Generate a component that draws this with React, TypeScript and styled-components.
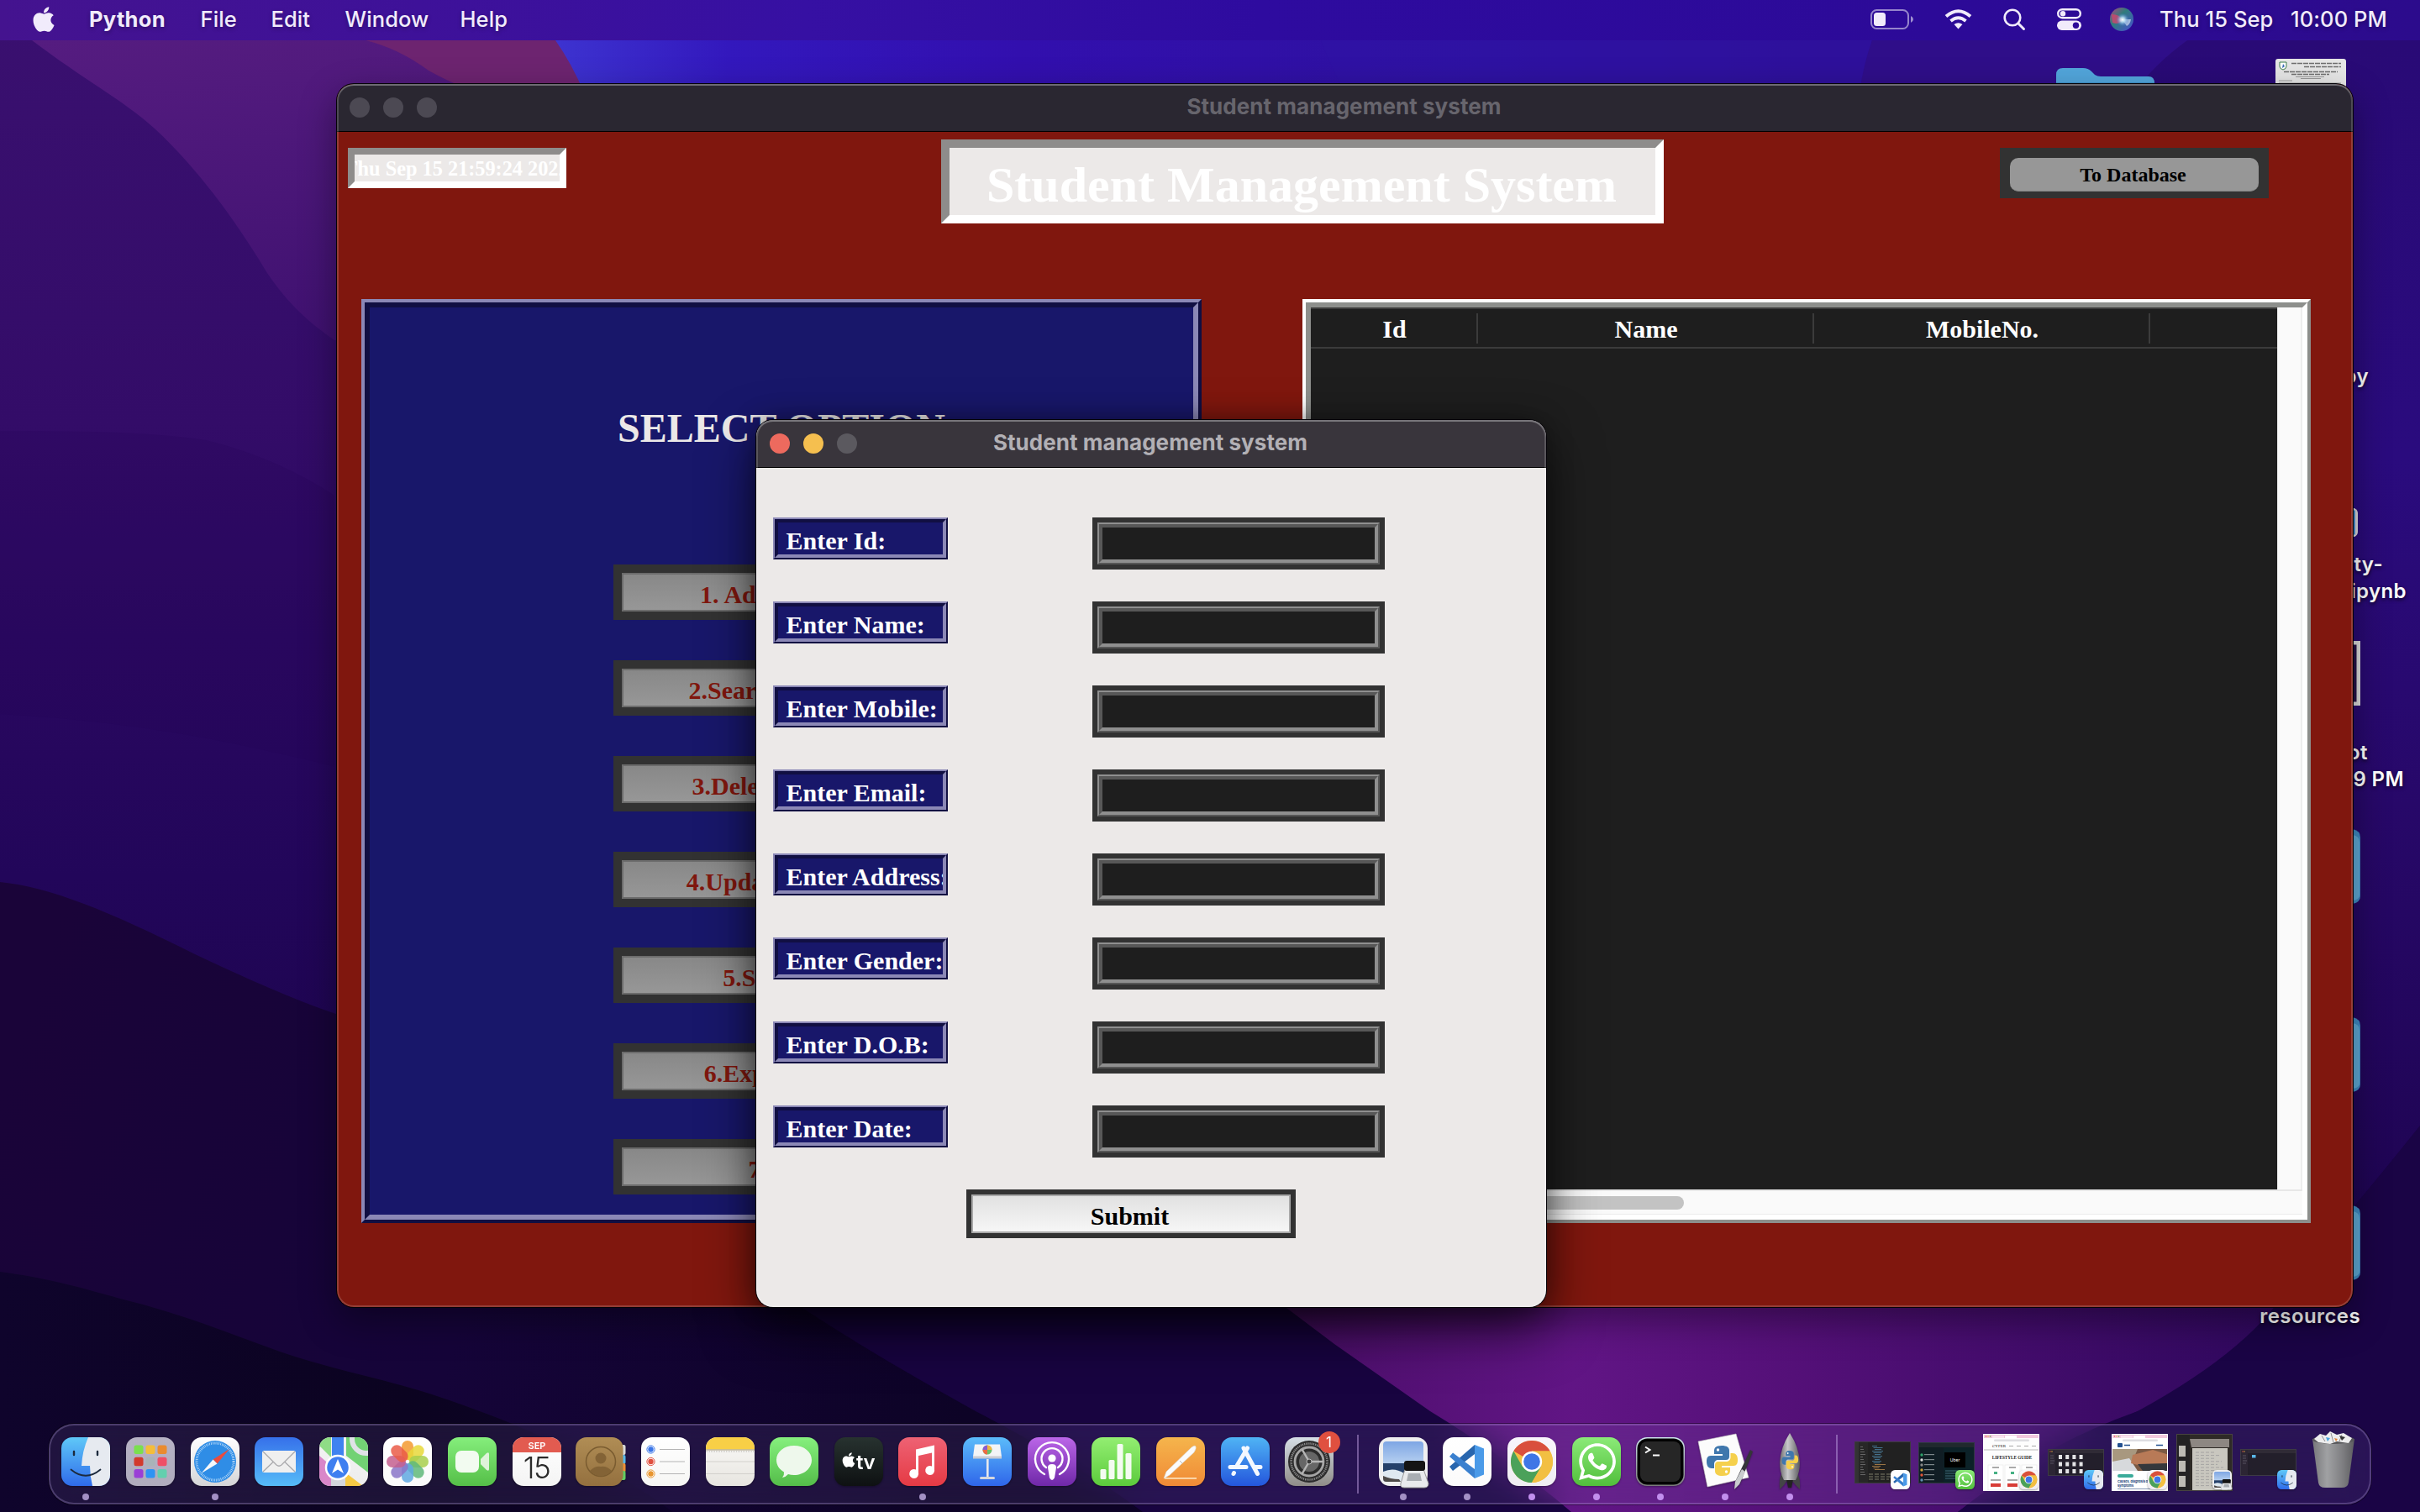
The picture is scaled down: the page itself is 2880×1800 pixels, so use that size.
import React from "react";
import styled, { createGlobalStyle, css } from "styled-components";
import { FaApple, FaWhatsapp } from "react-icons/fa";

const sans = `Inter, "Liberation Sans", sans-serif`;
const serif = `"Liberation Serif", "Times New Roman", serif`;

const Global = createGlobalStyle`
  html, body { margin: 0; padding: 0; background: #1a0540; }
  * { box-sizing: border-box; }
`;

/* ---------- desktop ---------- */

const Desktop = styled.main`
  position: relative;
  width: 2880px;
  height: 1800px;
  overflow: hidden;
  font-family: ${sans};
  color: #fff;
`;

const WallpaperSvg = styled.svg`
  position: absolute;
  inset: 0;
  width: 2880px;
  height: 1800px;
`;

const MenuBar = styled.nav`
  position: relative;
  display: flex;
  align-items: center;
  justify-content: space-between;
  height: 48px;
  padding: 0 36px 3px 39px;
  background: linear-gradient(90deg, #44138f 0, #3e1199 500px, #3610a3 960px, #2e0b9f 1500px, #2c0a98 2300px, #2c0b8c 100%);
  font-size: 25.5px;
  font-weight: 500;
  color: #f1ebfb;
  text-shadow: 0 2px 5px rgba(0, 0, 0, 0.3);
`;

const MenuGroup = styled.div`
  display: flex;
  align-items: center;
`;

const MenuItem = styled.span<{ $width: number; $bold?: boolean }>`
  width: ${(p) => p.$width}px;
  font-weight: ${(p) => (p.$bold ? 700 : 500)};
  letter-spacing: ${(p) => (p.$bold ? 0.3 : 0.1)}px;
  white-space: nowrap;
`;

const AppleMark = styled(FaApple)`
  width: 28px;
  height: 34px;
  margin: 0 40px 0 -1px;
`;

const StatusIcon = styled.svg<{ $gap: number }>`
  display: block;
  margin-right: ${(p) => p.$gap}px;
  overflow: visible;
`;

const DesktopItem = styled.div<{ $x: number; $y: number }>`
  position: absolute;
  left: ${(p) => p.$x}px;
  top: ${(p) => p.$y}px;
`;

const FileLabel = styled.div<{ $right: number; $top: number }>`
  position: absolute;
  right: ${(p) => 2880 - p.$right}px;
  top: ${(p) => p.$top}px;
  font-size: 24px;
  line-height: 32px;
  font-weight: 600;
  letter-spacing: 0.4px;
  white-space: nowrap;
  text-shadow: 0 2px 4px rgba(0, 0, 0, 0.7);
`;

/* ---------- windows ---------- */

const WindowFrame = styled.section<{ $x: number; $y: number; $w: number; $h: number; $tint: string; $active?: boolean }>`
  position: absolute;
  left: ${(p) => p.$x}px;
  top: ${(p) => p.$y}px;
  width: ${(p) => p.$w}px;
  height: ${(p) => p.$h}px;
  display: flex;
  flex-direction: column;
  border-radius: 20px;
  overflow: hidden;
  background: ${(p) => p.$tint};
  box-shadow: ${(p) =>
    p.$active
      ? "0 0 0 1px #050308, 0 26px 64px rgba(0, 0, 0, 0.6), 0 0 30px rgba(0, 0, 0, 0.35)"
      : "0 0 0 1px #050308, 0 16px 44px rgba(0, 0, 0, 0.4)"};

  &::after {
    content: "";
    position: absolute;
    inset: 0;
    border-radius: 20px;
    box-shadow: inset 0 0 0 2px rgba(255, 255, 255, 0.17), inset 0 2px 0 rgba(255, 255, 255, 0.18);
    pointer-events: none;
  }
`;

const TitleBar = styled.header<{ $active?: boolean }>`
  position: relative;
  flex: none;
  display: flex;
  align-items: center;
  justify-content: center;
  height: 57px;
  background: ${(p) => (p.$active ? "#39353c" : "#2a2731")};
  border-bottom: 1px solid #000;
  font-size: 26px;
  font-weight: 700;
  letter-spacing: 0.05px;
  color: ${(p) => (p.$active ? "#b2b0b5" : "#67656d")};
  padding: 0 2px 4px 0;
`;

const Lights = styled.div<{ $left: number }>`
  position: absolute;
  left: ${(p) => p.$left}px;
  top: 16px;
  display: flex;
  gap: 16px;
`;

const Light = styled.i<{ $color: string }>`
  width: 24px;
  height: 24px;
  border-radius: 50%;
  background: ${(p) => p.$color};
`;

type BevelProps = { $light: string; $dark: string };

/* sunken relief: dark top/left, light bottom/right */
const sunken = css<BevelProps>`
  border-style: solid;
  border-color: ${(p) => `${p.$dark} ${p.$light} ${p.$light} ${p.$dark}`};
`;

/* raised relief: light top/left, dark bottom/right */
const raised = css<BevelProps>`
  border-style: solid;
  border-color: ${(p) => `${p.$light} ${p.$dark} ${p.$dark} ${p.$light}`};
`;

const RidgeOuter = styled.div<BevelProps & { $size: number; $w: number; $h: number }>`
  ${raised}
  flex: none;
  display: flex;
  border-width: ${(p) => p.$size}px;
  width: ${(p) => p.$w}px;
  height: ${(p) => p.$h}px;
`;

const RidgeInner = styled.div<BevelProps & { $size: number; $fill: string }>`
  ${sunken}
  flex: 1;
  min-width: 0;
  display: flex;
  flex-direction: column;
  border-width: ${(p) => p.$size}px;
  background: ${(p) => p.$fill};
  overflow: hidden;
`;

type RidgeProps = {
  light: string;
  dark: string;
  outer: number;
  inner: number;
  width: number;
  height: number;
  fill: string;
  children?: React.ReactNode;
};

const Ridge = ({ light, dark, outer, inner, width, height, fill, children }: RidgeProps) => (
  <RidgeOuter $light={light} $dark={dark} $size={outer} $w={width} $h={height}>
    <RidgeInner $light={light} $dark={dark} $size={inner} $fill={fill}>
      {children}
    </RidgeInner>
  </RidgeOuter>
);

const HeaderRow = styled.div`
  flex: none;
  display: flex;
  align-items: flex-start;
  height: 199px;
  padding: 9px 100px 0 13px;
`;

const Banner = styled.div<BevelProps & { $size: number; $w: number; $h: number; $font: number; $drop: number; $left: number; $mt: number }>`
  ${sunken}
  flex: none;
  display: flex;
  align-items: center;
  justify-content: center;
  border-width: ${(p) => p.$size}px;
  width: ${(p) => p.$w}px;
  height: ${(p) => p.$h}px;
  margin: ${(p) => p.$mt}px 0 0 ${(p) => p.$left}px;
  padding: ${(p) => p.$drop}px 2px 0 0;
  background: #ece9e8;
  overflow: hidden;
  font: 700 ${(p) => p.$font}px/1 ${serif};
  color: #fff;
  white-space: nowrap;
`;

const DatabaseButton = styled.div`
  flex: none;
  width: 320px;
  height: 60px;
  margin: 10px 0 0 400px;
  padding: 12px;
  background: #323232;
`;

const DatabaseFace = styled.div`
  display: flex;
  align-items: center;
  justify-content: center;
  width: 296px;
  height: 40px;
  padding-right: 3px;
  border-radius: 10px;
  background: #979797;
  border-bottom: 1px solid #858585;
  font: 700 24px/1 ${serif};
  color: #000;
`;

const Panels = styled.div`
  display: flex;
  gap: 120px;
  padding-left: 29px;
`;

const SelectHeading = styled.h2`
  margin: 119px 0 0;
  height: 187px;
  text-align: center;
  font: 700 48px/50px ${serif};
  color: #ece9e8;
`;

const OptionList = styled.div`
  display: flex;
  flex-direction: column;
  align-items: center;
  gap: 48px;
`;

const TkButton = styled.div<{ $w: number; $h: number; $edge: string; $line: string }>`
  flex: none;
  display: flex;
  width: ${(p) => p.$w}px;
  height: ${(p) => p.$h}px;
  background: #323232;
  padding: ${(p) => p.$edge};

  & > span {
    flex: 1;
    display: flex;
    align-items: center;
    justify-content: center;
    border: 2px solid ${(p) => p.$line};
    font: 700 30px/1 ${serif};
    padding: 6px 3px 0 0;
  }
`;

const OptionFace = styled.span`
  background: linear-gradient(#888 0, #979797 100%);
  color: #80170e;
`;

const SubmitFace = styled.span`
  background: linear-gradient(#e1e1e1 0, #f6f6f6 100%);
  color: #000;
`;

const TableArea = styled.div`
  flex: 1;
  display: flex;
`;

const Table = styled.div`
  width: 1150px;
  height: 1050px;
  background: #1e1e1e;
`;

const TableHead = styled.div`
  display: flex;
  align-items: center;
  height: 49px;
  border-top: 2px solid #3b3b3b;
  border-bottom: 2px solid #3b3b3b;
`;

const HeadCell = styled.div<{ $w: number }>`
  flex: none;
  display: flex;
  align-items: center;
  justify-content: center;
  width: ${(p) => p.$w}px;
  height: 36px;
  padding: 3px 0 0 2px;
  border-right: 2px solid #3b3b3b;
  font: 700 30px/1 ${serif};
  color: #fff;
`;

const VerticalTrack = styled.div`
  width: 30px;
  height: 1050px;
  background: #fafafa;
  border-left: 1px solid #e8e8e8;
  border-right: 2px solid #eee;
`;

const HorizontalTrack = styled.div`
  height: 30px;
  padding: 6px 0 0 6px;
  background: #fafafa;
  border-top: 2px solid #e8e8e8;
  border-bottom: 1px solid #ececec;
`;

const Thumb = styled.div`
  width: 438px;
  height: 16px;
  border-radius: 8px;
  background: #c3c3c3;
`;

/* ---------- entry form ---------- */

const Form = styled.div`
  display: flex;
  flex-direction: column;
  gap: 38px;
  padding: 59px 20px 0;
`;

const FieldRow = styled.div`
  display: flex;
  justify-content: space-between;
  width: 728px;
  height: 62px;
`;

const FieldLabel = styled.div`
  padding: 7px 0 0 9.5px;
  font: 700 30px/1 ${serif};
  color: #fff;
  white-space: nowrap;
`;

const EntryBox = styled.div`
  padding: 6px;
  width: 348px;
  height: 62px;
  background: #323232;
`;

const SubmitRow = styled.div`
  padding-left: 230px;
`;

/* ---------- dock ---------- */

const DockBar = styled.footer`
  position: absolute;
  left: 58px;
  top: 1695px;
  width: 2764px;
  height: 96px;
  display: flex;
  padding-left: 4px;
  border: 2px solid rgba(190, 170, 230, 0.28);
  border-radius: 30px;
  background: rgba(140, 120, 190, 0.14);
  backdrop-filter: blur(24px);
  box-shadow: 0 0 0 1px rgba(0, 0, 0, 0.4);
`;

const DockSlot = styled.div`
  position: relative;
  flex: none;
  width: 76.63px;
  padding-top: 14px;
  display: flex;
  flex-direction: column;
  align-items: center;
`;

const IconSvg = styled.svg`
  display: block;
  width: 58px;
  height: 58px;
  overflow: visible;
  filter: drop-shadow(0 1px 1px rgba(0, 0, 0, 0.35));
`;

const RunDot = styled.i<{ $bright?: boolean }>`
  width: 8px;
  height: 8px;
  margin-top: 9px;
  border-radius: 50%;
  background: ${(p) => (p.$bright ? "#c28fee" : "#a390c4")};
`;

const DockRule = styled.div<{ $w: number }>`
  flex: none;
  width: ${(p) => p.$w}px;
  padding: 11px 0 0 3px;
  display: flex;
  justify-content: center;

  &::before {
    content: "";
    width: 2px;
    height: 70px;
    background: rgba(190, 160, 225, 0.5);
  }
`;

const NotificationBadge = styled.b`
  position: absolute;
  right: 2px;
  top: 7px;
  width: 26px;
  height: 26px;
  display: flex;
  align-items: center;
  justify-content: center;
  border-radius: 50%;
  background: #e0503f;
  font-size: 17px;
  font-weight: 400;
`;

const ThumbSlot = styled.div`
  position: relative;
  flex: none;
  width: 76.63px;
  height: 88px;
  display: flex;
  align-items: center;
  justify-content: center;
`;

const ThumbBadge = styled.div`
  position: absolute;
  left: 48px;
  top: 53px;
  width: 23px;
  height: 23px;

  & > svg {
    width: 23px;
    height: 23px;
  }
`;

const MiniWindow = styled.div<{ $h: number; $bg: string }>`
  width: 67px;
  height: ${(p) => p.$h}px;
  background: ${(p) => p.$bg};
  overflow: hidden;
  border: 1px solid rgba(255, 255, 255, 0.12);
`;

/* ---------- drawings ---------- */

const Wallpaper = () => (
  <WallpaperSvg viewBox="0 0 2880 1800">
    <defs>
      <linearGradient id="wBase" x1="0" y1="0" x2="0" y2="1">
        <stop offset="0" stopColor="#3a1070" />
        <stop offset=".28" stopColor="#330c68" />
        <stop offset=".42" stopColor="#2a0860" />
        <stop offset=".58" stopColor="#22065a" />
        <stop offset="1" stopColor="#15033a" />
      </linearGradient>
      <linearGradient id="wPlum" x1="0" y1="0" x2=".2" y2="1">
        <stop offset="0" stopColor="#551c80" />
        <stop offset="1" stopColor="#3f1170" />
      </linearGradient>
      <linearGradient id="wBlue" x1="0" y1="0" x2="1" y2="0">
        <stop offset="0" stopColor="#3d33d0" />
        <stop offset=".13" stopColor="#3318bd" />
        <stop offset=".35" stopColor="#320fae" />
        <stop offset=".7" stopColor="#2e119f" />
        <stop offset="1" stopColor="#2c0c84" />
      </linearGradient>
      <linearGradient id="wRight" x1="0" y1="0" x2="0" y2="1">
        <stop offset="0" stopColor="#290a76" />
        <stop offset=".3" stopColor="#2a0b7e" />
        <stop offset=".55" stopColor="#270869" />
        <stop offset=".8" stopColor="#200556" />
        <stop offset="1" stopColor="#180340" />
      </linearGradient>
      <linearGradient id="wMid" gradientUnits="userSpaceOnUse" x1="0" y1="1300" x2="1150" y2="1680">
        <stop offset="0" stopColor="#1a0439" />
        <stop offset=".5" stopColor="#150439" />
        <stop offset="1" stopColor="#0d0326" />
      </linearGradient>
      <linearGradient id="wLow" x1="0" y1="0" x2="1" y2="0">
        <stop offset="0" stopColor="#0f042c" />
        <stop offset=".6" stopColor="#0b0320" />
        <stop offset="1" stopColor="#0d0328" />
      </linearGradient>
      <linearGradient id="wPurple" x1="0" y1="0" x2="1" y2="0">
        <stop offset="0" stopColor="#480d66" />
        <stop offset=".3" stopColor="#611585" />
        <stop offset=".5" stopColor="#541078" />
        <stop offset="1" stopColor="#2a075a" />
      </linearGradient>
    </defs>
    <rect width="2880" height="1800" fill="url(#wBase)" />
    <path d="M0 513 Q170 512 245 524 Q330 545 398 590 L398 913 Q370 905 345 900 Q180 860 0 850Z" fill="#250456" opacity=".22" />
    <path d="M38 48 C100 95 145 118 184 153 C240 205 285 270 318 325 C345 365 370 385 398 405 L900 420 L900 48Z" fill="url(#wPlum)" />
    <path d="M435 48 Q475 58 510 84 Q530 95 545 101 L720 110 L661 48Z" fill="#6d2470" />
    <path d="M661 48 Q680 75 695 110 L2240 110 L2240 48Z" fill="url(#wBlue)" />
    <path d="M1572 48 Q1580 70 1600 110 L2213 110 L2228 48Z" fill="#2f13a4" opacity=".7" />
    <path d="M2228 48 Q2218 75 2213 110 L2880 110 L2880 48Z" fill="#2f0e89" />
    <path d="M2603 48 Q2563 77 2540 110 L2760 1700 L2880 1700 L2880 48Z" fill="url(#wRight)" />
    <path d="M0 1050 C60 1056 130 1085 230 1135 C300 1168 350 1190 400 1207 L1600 1500 L1900 1800 L0 1800Z" fill="url(#wMid)" />
    <path d="M0 1514 C60 1522 100 1534 143 1546 C210 1562 270 1586 333 1609 C400 1632 460 1642 517 1661 C620 1695 720 1740 801 1800 L0 1800Z" fill="url(#wLow)" />
    <path d="M900 1520 C1000 1590 1090 1640 1161 1680 C1240 1722 1300 1755 1360 1800 L1900 1800 L1600 1520Z" fill="#180440" />
    <path d="M1480 1520 L1531 1557 L1588 1600 L1702 1680 Q1800 1740 1870 1800 L2330 1800 Q2430 1730 2544 1680 L2780 1580 L2790 1520Z" fill="url(#wPurple)" />
    <path d="M2330 1800 Q2430 1720 2544 1680 Q2690 1600 2730 1520 Q2800 1440 2880 1340 L2880 1800Z" fill="#1a0445" />
  </WallpaperSvg>
);

const Grad = ({ id, from, to }: { id: string; from: string; to: string }) => (
  <linearGradient id={id} x1="0" y1="0" x2="0" y2="1">
    <stop offset="0" stopColor={from} />
    <stop offset="1" stopColor={to} />
  </linearGradient>
);

const Tile = ({ id, from, to, children }: { id: string; from: string; to: string; children?: React.ReactNode }) => (
  <IconSvg viewBox="0 0 58 58">
    <defs>
      <Grad id={id} from={from} to={to} />
      <clipPath id={`${id}-c`}>
        <rect width="58" height="58" rx="13" />
      </clipPath>
    </defs>
    <g clipPath={`url(#${id}-c)`}>
      <rect width="58" height="58" fill={`url(#${id})`} />
      {children}
    </g>
  </IconSvg>
);

const Finder = ({ id }: { id: string }) => (
  <Tile id={id} from="#5fc8f8" to="#2f6bea">
    <path d="M32 0 Q25 16 24 34 L34 34 Q34 46 37 58 L58 58 L58 0Z" fill="#e6eaf0" />
    <path d="M15 17 V21 M43 17 V21" stroke="#1c2a3d" strokeWidth="2.4" strokeLinecap="round" />
    <path d="M11.500 38.500 Q29 53 46.500 38.500" stroke="#1c2a3d" strokeWidth="1.800" fill="none" strokeLinecap="round" />
  </Tile>
);

const launchColors = ["#7ae04e", "#f4bd3b", "#ea8b2f", "#d23a2d", "#a9b3b8", "#ef4f66", "#9a3fd6", "#2f93f4", "#63cfae"];
const Launchpad = () => (
  <Tile id="launch" from="#b6b2c4" to="#b0acbd">
    {launchColors.map((c, i) => (
      <rect key={c} x={9.5 + (i % 3) * 14} y={9.5 + Math.floor(i / 3) * 14.2} width="11" height="10.5" rx="2.5" fill={c} />
    ))}
  </Tile>
);

const Safari = () => (
  <Tile id="safari" from="#ffffff" to="#d5d5d7">
    <circle cx="29" cy="29" r="25" fill="#2f8de6" />
    <circle cx="29" cy="29" r="22" fill="none" stroke="#cfe7fb" strokeWidth="3" strokeDasharray=".7 1.22" />
    <path d="M46 14 L26.500 26.500 L31.500 31.500Z" fill="#ea4b3e" />
    <path d="M12.500 43 L26.500 26.500 L31.500 31.500Z" fill="#f5f7fa" />
  </Tile>
);

const Mail = () => (
  <Tile id="mail" from="#3670ea" to="#56bcf8">
    <rect x="9" y="16" width="40" height="26" rx="2.5" fill="#efefef" />
    <path d="M10 17 L26 33 Q29 35.500 32 33 L48 17 M10 41 L22 29.500 M48 41 L36 29.500" fill="none" stroke="#a9a9ac" strokeWidth="1.3" />
  </Tile>
);

const Maps = () => (
  <Tile id="maps" from="#f3f3f3" to="#ededed">
    <path d="M0 0 H14 V24 L0 10Z" fill="#8fdc86" />
    <path d="M32 0 H58 V42 L32 22Z" fill="#72d274" />
    <circle cx="56" cy="2" r="17" fill="none" stroke="#dfe2e6" strokeWidth="6" />
    <rect x="15" width="14" height="32" fill="#3f83f0" />
    <path d="M0 22 L14 34 V58 H0Z" fill="#d987c9" />
    <rect x="14" y="34" width="17" height="24" fill="#d4d6dc" />
    <path d="M31 42 L52 58 H31Z" fill="#f6c945" />
    <circle cx="22" cy="36" r="14" fill="#3f7ff0" stroke="#fff" strokeWidth="2.5" />
    <path d="M22 26 L29 43 L22 38.500 L15 43Z" fill="#fff" />
  </Tile>
);

const petals = ["#f39a2f", "#e8d83a", "#a8cf4d", "#5fb87a", "#5fa8e0", "#8a76c8", "#c45f8f", "#ea5c48"];
const Photos = () => (
  <Tile id="photos" from="#ffffff" to="#fafafa">
    {petals.map((c, i) => (
      <rect key={c} x="22" y="4" width="14" height="23" rx="7" fill={c} opacity=".85" transform={`rotate(${i * 45} 29 29)`} />
    ))}
  </Tile>
);

const FaceTime = () => (
  <Tile id="facetime" from="#85ee7c" to="#55bf48">
    <rect x="9" y="16" width="28" height="26" rx="7" fill="#f2fbf0" />
    <path d="M39 26 L46 19 Q49 17 49 20 V38 Q49 41 46 39 L39 32Z" fill="#dff3da" />
  </Tile>
);

const CalendarIcon = () => (
  <Tile id="cal" from="#ffffff" to="#f4f4f4">
    <rect width="58" height="18" fill="#e25b50" />
    <text x="29" y="14" textAnchor="middle" fontFamily={sans} fontSize="11" fontWeight="600" fill="#fff">SEP</text>
    <text x="28.5" y="49" textAnchor="middle" fontFamily={sans} fontSize="35" fontWeight="300" fill="#2b2b2b" letterSpacing="-1.5">15</text>
  </Tile>
);

const Contacts = () => (
  <IconSvg viewBox="1 0 58 58">
    <defs><Grad id="contacts" from="#b08d55" to="#94703f" /></defs>
    <rect x="50" y="9" width="9.5" height="12" rx="2" fill="#d9d9d9" />
    <rect x="50" y="21" width="9.5" height="11" rx="2" fill="#57b7ea" />
    <rect x="50" y="31" width="9.5" height="11" rx="2" fill="#ee8f35" />
    <rect x="50" y="40" width="9.5" height="11" rx="2" fill="#62cc62" />
    <rect width="56.5" height="58" rx="13" fill="url(#contacts)" />
    <circle cx="30" cy="29" r="17.5" fill="none" stroke="#7a5c30" strokeWidth="1.5" />
    <circle cx="30" cy="25" r="6.5" fill="#836336" />
    <path d="M17 40 Q23 34 30 35 Q37 34 43 40 Q37 46 30 46 Q23 46 17 40Z" fill="#836336" />
  </IconSvg>
);

const Reminders = () => (
  <Tile id="rem" from="#ffffff" to="#f6f6f4">
    {["#3b76e8", "#e0503f", "#e8952f"].map((c, i) => (
      <g key={c}>
        <circle cx="11.5" cy={14.5 + i * 14.5} r="4.6" fill="#fff" stroke={c} strokeWidth="1" />
        <circle cx="11.5" cy={14.5 + i * 14.5} r="3.2" fill={c} />
        <path d={`M22 ${14.5 + i * 14.5} H52`} stroke="#b4b4b4" strokeWidth="1.2" />
      </g>
    ))}
  </Tile>
);

const Notes = () => (
  <Tile id="notes" from="#faf9f7" to="#e7e5e0">
    <rect width="58" height="14.5" fill="#f8cf46" />
    <path d="M0 15 H58" stroke="#a59a78" strokeWidth="1" />
    <path d="M0 17 H58" stroke="#b5b2aa" strokeWidth="1" strokeDasharray="1 1" />
    <path d="M0 29 H58 M0 43.500 H58" stroke="#d2d0cc" strokeWidth="1" />
  </Tile>
);

const Messages = () => (
  <Tile id="msg" from="#86f07e" to="#54bd49">
    <path d="M29 10 C41 10 50 17.500 50 27 C50 37 41 45 29 45 Q25 45 22 44 Q19 47.500 15 48 Q17.500 45 17 41.500 C11 38 8 33 8 27 C8 17.500 17 10 29 10Z" fill="#eef8ec" />
  </Tile>
);

const TvApp = () => (
  <Tile id="tv" from="#27322f" to="#0e1112">
    <svg x="7" y="17" width="20" height="22"><FaApple size={20} color="#fff" /></svg>
    <text x="26" y="38" fontFamily={sans} fontSize="24" fontWeight="600" fill="#fff" letterSpacing="-.5">tv</text>
  </Tile>
);

const Music = () => (
  <Tile id="music" from="#ee6274" to="#e53a44">
    <path d="M21 14.500 L43 9.500 V38 A5.500 5.500 0 1 1 40 34.500 V18.500 L24 22 V42 A5.500 5.500 0 1 1 21 38.500Z" fill="#fff" />
  </Tile>
);

const Keynote = () => (
  <Tile id="key" from="#5bbcfa" to="#2f66ea">
    <path d="M14 8.500 H44 L46 23 H12Z" fill="#f3f4f6" />
    <rect x="12" y="22.5" width="34" height="3" fill="#c9ccd4" />
    <circle cx="29" cy="15" r="5.5" fill="#69c16a" />
    <path d="M29 15 V9.500 A5.500 5.500 0 0 0 23.500 15Z" fill="#8b5bd0" />
    <path d="M29 15 L23.500 15 A5.500 5.500 0 0 0 29 20.500Z" fill="#eb6a45" />
    <path d="M29 15 V9.500 A5.500 5.500 0 0 1 34.500 15Z" fill="#f0b340" />
    <rect x="28" y="26" width="2.6" height="21" fill="#e6e8ec" />
    <rect x="20" y="47" width="18" height="3" rx="1.5" fill="#d4d7dd" />
  </Tile>
);

const Podcasts = () => (
  <Tile id="pod" from="#bb66e8" to="#6f28a8">
    <path d="M20 44 A20 20 0 1 1 38 44" fill="none" stroke="#fff" strokeWidth="2.4" strokeLinecap="round" />
    <path d="M22 36 A12.500 12.500 0 1 1 36 36" fill="none" stroke="#fff" strokeWidth="2.4" strokeLinecap="round" />
    <circle cx="29" cy="25" r="4.6" fill="#fff" />
    <path d="M24 36 Q24 32 29 32 Q34 32 34 36 L32 48 Q31 51 29 51 Q27 51 26 48Z" fill="#fff" />
  </Tile>
);

const Numbers = () => (
  <Tile id="num" from="#93ee72" to="#5ccb3c">
    {[[10.5, 38, 12], [20.5, 27, 23], [30.5, 8, 42], [40.5, 19, 31]].map(([x, y, h]) => (
      <rect key={x} x={x} y={y} width="7" height={h} rx="1.5" fill="#f4fcf1" />
    ))}
  </Tile>
);

const Pages = () => (
  <Tile id="pages" from="#f5b54c" to="#f08a36">
    <path d="M10 48.800 H48" stroke="#fde0b8" strokeWidth="1.8" />
    <path d="M9 49 L12 41 L42 12 Q46 9 47 11 Q48 13 45 18 L16 45Z" fill="#fbfbfb" stroke="#d6d6d6" strokeWidth=".6" />
    <path d="M28 28 L31 31" stroke="#b9b9b9" />
  </Tile>
);

const AppStore = () => (
  <Tile id="store" from="#4fb4f5" to="#2456dc">
    <g stroke="#f3f8ff" strokeWidth="5" strokeLinecap="round" fill="none">
      <path d="M31.500 13 L19.500 33" />
      <path d="M27 13 L43.500 43.500" />
      <path d="M11 35.500 H30 M40.500 35.500 H47" />
      <path d="M15.500 42.500 L15 43.500" />
    </g>
  </Tile>
);

const Settings = () => (
  <Tile id="set" from="#d6dfe6" to="#908d88">
    <circle cx="29" cy="29" r="25" fill="#2c2c2c" />
    <circle cx="29" cy="29" r="21.5" fill="none" stroke="#8d8d8d" strokeWidth="2.5" strokeDasharray="1.2 1" />
    <circle cx="29" cy="29" r="17" fill="none" stroke="#a5a5a5" strokeWidth="2.8" />
    <circle cx="29" cy="29" r="12" fill="#666" />
    <path d="M29 29 H46 M29 29 L20.500 14.300 M29 29 L20.500 43.700" stroke="#b5b5b5" strokeWidth="2.4" />
    <circle cx="29" cy="29" r="3" fill="#3a3a3a" stroke="#bbb" />
  </Tile>
);

const PreviewIcon = ({ id }: { id: string }) => (
  <IconSvg viewBox="0 0 58 58">
    <defs><Grad id={id} from="#7ea6e4" to="#b5cff0" /></defs>
    <rect width="58" height="58" rx="13" fill="#efeff0" />
    <path d="M5 9 Q5 5 9 5 H49 Q53 5 53 9 V31 H5Z" fill={`url(#${id})`} />
    <path d="M5 31 H53 V53 H9 Q5 53 5 49Z" fill="#25416b" />
    <path d="M5 41 Q18 35 30 43 L30 53 H9 Q5 53 5 49Z" fill="#dfe9f1" />
    <path d="M5 46 Q14 50 24 50 L26 53 H9 Q5 53 5 49Z" fill="#4e4a48" />
    <path d="M31 38 H53 L59 55 Q59 60 54 60 H30 Q25 60 26 55Z" fill="#e8eaec" stroke="#9b9b9b" />
    <path d="M35 43 L49 43 L51 52 L33 52Z" fill="#a8adb2" />
    <rect x="30" y="28" width="25" height="12" rx="3" fill="#141414" />
  </IconSvg>
);

const VsCode = ({ id }: { id: string }) => (
  <Tile id={id} from="#ffffff" to="#fbfbfb">
    <path d="M38 9 L8 35 L12 40 L38 20Z" fill="#2866ae" />
    <path d="M38 49 L8 23 L12 18.500 L38 38Z" fill="#3a80cf" />
    <path d="M38 9 L49 13.500 V44.500 L38 49Z" fill="#4a9ae8" />
  </Tile>
);

const Chrome = ({ id }: { id: string }) => (
  <Tile id={id} from="#f8f4fb" to="#efedf2">
    <circle cx="29" cy="29" r="25" fill="#f2bf42" />
    <path d="M29 29 L7.350 16.500 A25 25 0 0 1 50.650 16.500 L29 16.500Z" fill="#d94f3d" />
    <path d="M7.350 16.500 A25 25 0 0 0 29 54 L40 35.200 L29 29 L18 35.200Z" fill="#4ba15a" />
    <path d="M29 16.500 H50.650 A25 25 0 0 1 29 54 L40 35.200Z" fill="#f2bf42" />
    <circle cx="29" cy="29" r="12.2" fill="#fff" />
    <circle cx="29" cy="29" r="9.8" fill="#3f76e6" />
  </Tile>
);

const WhatsApp = ({ id }: { id: string }) => (
  <Tile id={id} from="#8bea78" to="#52bf3c">
    <svg x="5" y="4" width="50" height="50"><FaWhatsapp size={50} color="#fff" /></svg>
  </Tile>
);

const Terminal = () => (
  <IconSvg viewBox="0 0 58 58">
    <defs><Grad id="termEdge" from="#cfe5ee" to="#7b7b7b" /></defs>
    <rect width="58" height="58" rx="13" fill="url(#termEdge)" />
    <rect x="1.5" y="1.5" width="55" height="55" rx="12" fill="#000" />
    <rect x="5" y="5" width="48" height="48" rx="8" fill="#262626" />
    <path d="M11 11.500 L16.500 15 L11 18.500 M20 21.500 H28" stroke="#fff" strokeWidth="2" fill="none" />
  </IconSvg>
);

const Snakes = () => (
  <>
    <path d="M18 0 C10 0 9 3 9 7 V10 H19 V12 H5 C1 12 0 15 0 19 C0 24 2 27 6 27 H9 V22 C9 19 11 17 14 17 H23 C26 17 27 15 27 13 V6 C27 2 24 0 18 0Z" fill="#3f77ad" />
    <path d="M19 36 C27 36 28 33 28 29 V26 H18 V24 H32 C36 24 37 21 37 17 C37 12 35 9 31 9 H28.500 V14 C28.500 17 26 19 23 19 H14 C11 19 10 21 10 23 V30 C10 34 13 36 19 36Z" fill="#f5d04c" />
    <circle cx="13.5" cy="5" r="1.7" fill="#fff" />
    <circle cx="23.5" cy="31" r="1.7" fill="#fff" />
  </>
);

const Idle = () => (
  <IconSvg viewBox="0 0 58 58">
    <path d="M-3 5 L42 -4 L57 48 L8 59Z" fill="#fcfcfc" stroke="#c9c9c9" strokeWidth=".6" />
    <g transform="translate(7 10)"><Snakes /></g>
    <path d="M59 15 L62 17 L47 55 L40 62 L41 53Z" fill="#35363a" />
    <path d="M49 38 L53 41 L46 56 L40 62 L41 53Z" fill="#c9cbce" />
  </IconSvg>
);

const Rocket = () => (
  <IconSvg viewBox="0 0 58 58">
    <defs>
      <linearGradient id="rocketBody" x1="0" x2="1">
        <stop offset="0" stopColor="#6c6c6e" />
        <stop offset=".4" stopColor="#c9c9cb" />
        <stop offset="1" stopColor="#5b5b5e" />
      </linearGradient>
    </defs>
    <path d="M20 42 Q16 47 17 62 L22 57 L26 51 Z M37 42 Q42 47 41 62 L36 57 L31 51Z" fill="#444447" />
    <path d="M25 50 H33 L31 60 H27Z" fill="#222" />
    <path d="M29 -5 Q40 12 41 30 Q41 42 36 51 H22 Q17 42 17 30 Q18 12 29 -5Z" fill="url(#rocketBody)" />
    <g transform="translate(19.5 16) scale(.53 .62)"><Snakes /></g>
  </IconSvg>
);

const TrashSvg = styled.svg`
  display: block;
  width: 52px;
  height: 68px;
  margin-top: -7px;
`;

const Trash = () => (
  <TrashSvg viewBox="0 0 52 68">
    <defs>
      <linearGradient id="can" x1="0" x2="1">
        <stop offset="0" stopColor="#77777a" />
        <stop offset=".35" stopColor="#a0a1a3" />
        <stop offset=".7" stopColor="#808083" />
        <stop offset="1" stopColor="#5e5e61" />
      </linearGradient>
    </defs>
    <path d="M1 9 H51 L44 61 Q43 67 36 67 H16 Q9 67 8 61Z" fill="url(#can)" />
    <ellipse cx="26" cy="10" rx="25" ry="5" fill="#57575a" />
    <path d="M3 9 L10 3 L17 5 L22 0 L30 4 L38 2 L48 8 L44 14 L30 12 L22 15 L8 13Z" fill="#ededee" />
    <path d="M12 5 L16 12 M23 2 L26 13 M36 4 L33 12" stroke="#8f8f92" />
    <path d="M17 7 L22 8 L19 12Z" fill="#4aa6dd" />
    <path d="M33 5 L40 7 L36 11Z" fill="#333" />
    <path d="M27 8 L31 9 L29 12Z" fill="#e58738" />
  </TrashSvg>
);

/* dock previews of minimised windows */

const CodeShot = () => (
  <svg width="67" height="50" viewBox="0 0 67 50">
    <rect width="67" height="50" fill="#212121" />
    <rect width="4" height="48" fill="#333" />
    <rect x="4" width="11" height="48" fill="#272727" />
    {Array.from({ length: 15 }, (_, i) => (
      <rect key={i} x={20 + (i % 3) * 1.5} y={4 + i * 2} width={6 + ((i * 5) % 8)} height="1" fill={i > 10 ? "#9a7444" : "#44708a"} />
    ))}
    {Array.from({ length: 12 }, (_, i) => (
      <rect key={i} x="6" y={5 + i * 3} width={3 + (i % 4)} height="1" fill="#666" />
    ))}
    <path d="M16 38 H60 M16 41 H54 M16 44 H40" stroke="#7c7c6a" strokeWidth="1" strokeDasharray="5 2" />
    <rect y="48" width="67" height="2" fill="#2f7fc4" />
  </svg>
);

const ChatShot = () => (
  <svg width="67" height="48" viewBox="0 0 67 48">
    <rect width="67" height="48" fill="#101d24" />
    <rect width="67" height="5" fill="#20292e" />
    <rect x="29" y="5" width="38" height="43" fill="#0c2228" />
    {["#2ea36b", "#ddd", "#888", "#c8a43f", "#e05639", "#5f8fb0"].map((c, i) => (
      <g key={c}>
        <circle cx="3" cy={14 + i * 6} r="1.7" fill={c} />
        <rect x="6" y={13 + i * 6} width="12" height="1.2" fill="#7b8589" />
      </g>
    ))}
    <rect x="30" y="11" width="25" height="18" fill="#000" />
    <text x="42.5" y="22" textAnchor="middle" fontFamily={sans} fontSize="5" fill="#fff">Uber</text>
    <path d="M31 33 H53 M31 36 H55 M31 39 H50 M31 42 H54" stroke="#3f6977" strokeWidth="1.2" />
  </svg>
);

const BrowserChrome = () => (
  <>
    <rect width="67" height="4" fill="#f2c9dd" />
    <circle cx="2.5" cy="2" r=".8" fill="#e8574a" />
    <circle cx="5" cy="2" r=".8" fill="#efb73d" />
    <circle cx="7.5" cy="2" r=".8" fill="#52b946" />
    <rect x="10" y="1" width="14" height="3" fill="#f9e6ef" />
    <rect x="25" y="1" width="14" height="3" fill="#fff" />
    <rect x="12" y="5.5" width="42" height="2.4" rx="1.2" fill="#dedee2" />
  </>
);

const GuideShot = () => (
  <svg width="67" height="68" viewBox="0 0 67 68">
    <rect width="67" height="68" fill="#fdfdfd" />
    <BrowserChrome />
    <text x="10" y="15" fontFamily={serif} fontSize="5" fill="#111">CYFER</text>
    <path d="M30 13.500 H66" stroke="#aaa" strokeWidth="1" strokeDasharray="5 4" />
    <path d="M0 18 H67" stroke="#aaa" strokeWidth=".8" />
    <text x="33.5" y="29" textAnchor="middle" fontFamily={serif} fontSize="5.2" fontWeight="700" fill="#222">LIFESTYLE GUIDE</text>
    {[5, 25, 45].map((x) => (
      <g key={x}>
        <rect x={x} y="36" width="18" height="30" fill="#fff" stroke="#e7e7e7" strokeWidth=".6" />
        <path d={`M${x + 5} 39 H${x + 13} M${x + 3} 54 H${x + 15}`} stroke="#555" strokeWidth="1" />
        <rect x={x + 7} y="44" width="4" height="3" fill="#46b184" />
        <rect x={x + 3} y="58" width="12" height="4" fill="#d83c36" />
      </g>
    ))}
  </svg>
);

const HealthShot = () => (
  <svg width="67" height="68" viewBox="0 0 67 68">
    <rect width="67" height="68" fill="#fff" />
    <BrowserChrome />
    <rect x="6" y="10" width="6" height="5" rx="1" fill="#23508f" />
    <path d="M14 12.500 H21 M52 12.500 H60" stroke="#23508f" strokeWidth="1.4" />
    <rect y="17" width="67" height="26" fill="#7b5a44" />
    <path d="M0 17 H30 L22 36 L0 43Z" fill="#a8987f" />
    <path d="M0 32 L20 28 L30 43 H0Z" fill="#d7d9dc" />
    <path d="M24 24 L48 18 L67 24 V36 L38 38 L22 34Z" fill="#b87a57" />
    <path d="M30 35 L67 34 V43 H36Z" fill="#35383c" />
    <rect x="6" y="47" width="19" height="4" rx="2" fill="#3aab9a" />
    <text x="6" y="57" fontFamily={sans} fontSize="3.7" fontWeight="700" fill="#203f78">Causes, diagnosis or</text>
    <text x="6" y="61.5" fontFamily={sans} fontSize="3.7" fontWeight="700" fill="#203f78">symptoms</text>
    <path d="M6 64.500 H48" stroke="#8b9bb8" strokeWidth="1" />
  </svg>
);

const ScanShot = () => (
  <svg width="67" height="68" viewBox="0 0 67 68">
    <rect width="67" height="68" fill="#2e2a26" />
    <rect width="15" height="68" fill="#232224" />
    <path d="M15 5 H62 V15 H17Z" fill="#8d8782" />
    <path d="M18 16 H60 V68 H18Z" fill="#c9c7bf" />
    {[13, 31, 49].map((y) => <rect key={y} x="2" y={y} width="8" height="13" fill="#bdbbb5" />)}
    {Array.from({ length: 12 }, (_, i) => (
      <path key={i} d={`M22 ${21 + i * 3.6} H${44 + ((i * 7) % 12)}`} stroke="#9c9b9a" strokeWidth=".8" strokeDasharray="4 2" />
    ))}
  </svg>
);

const FilesShot = ({ full }: { full?: boolean }) => (
  <svg width="67" height="32" viewBox="0 0 67 32">
    <rect width="67" height="32" fill="#231f2b" />
    <rect width="8" height="32" fill="#2c2634" />
    <rect x="8" width="59" height="4" fill="#302b36" />
    <circle cx="2" cy="2" r=".7" fill="#e8574a" />
    <circle cx="4" cy="2" r=".7" fill="#efb73d" />
    <path d="M2 7 H6 M2 10 H6 M2 13 H7 M2 16 H6" stroke="#66606f" strokeWidth=".8" />
    {full
      ? Array.from({ length: 12 }, (_, i) => (
          <rect key={i} x={12 + (i % 4) * 8.2} y={6 + Math.floor(i / 4) * 8.5} width="4" height="5" fill="#e4e4e6" />
        ))
      : <rect x="13" y="6" width="4.5" height="3.5" fill="#5ab7ea" />}
  </svg>
);

/* ---------- content ---------- */

const options = ["1. Add Student", "2.Search Student", "3.Delete Student", "4.Update Student", "5.Show All", "6.Export Data", "7.Exit"];
const fields = ["Enter Id:", "Enter Name:", "Enter Mobile:", "Enter Email:", "Enter Address:", "Enter Gender:", "Enter D.O.B:", "Enter Date:"];
const columns = [{ name: "Id", width: 199 }, { name: "Name", width: 400 }, { name: "MobileNo.", width: 400 }];

const navy = { light: "#8b88b6", dark: "#110f42" };

const leftApps: { node: React.ReactNode; running?: boolean; badge?: string }[] = [
  { node: <Finder id="finder" />, running: true },
  { node: <Launchpad /> },
  { node: <Safari />, running: true },
  { node: <Mail /> },
  { node: <Maps /> },
  { node: <Photos /> },
  { node: <FaceTime /> },
  { node: <CalendarIcon /> },
  { node: <Contacts /> },
  { node: <Reminders /> },
  { node: <Notes /> },
  { node: <Messages /> },
  { node: <TvApp /> },
  { node: <Music />, running: true },
  { node: <Keynote /> },
  { node: <Podcasts /> },
  { node: <Numbers /> },
  { node: <Pages /> },
  { node: <AppStore /> },
  { node: <Settings />, badge: "1" },
];

const rightApps = [
  <PreviewIcon id="preview" />,
  <VsCode id="vscode" />,
  <Chrome id="chrome" />,
  <WhatsApp id="whatsapp" />,
  <Terminal />,
  <Idle />,
  <Rocket />,
];

const minimised = [
  { h: 50, bg: "#212121", shot: <CodeShot />, badge: <VsCode id="b1" /> },
  { h: 49, bg: "#101d24", shot: <ChatShot />, badge: <WhatsApp id="b2" /> },
  { h: 68, bg: "#fff", shot: <GuideShot />, badge: <Chrome id="b3" /> },
  { h: 32, bg: "#231f2b", shot: <FilesShot full />, badge: <Finder id="b4" /> },
  { h: 68, bg: "#fff", shot: <HealthShot />, badge: <Chrome id="b5" /> },
  { h: 68, bg: "#2e2a26", shot: <ScanShot />, badge: <PreviewIcon id="b6" /> },
  { h: 32, bg: "#231f2b", shot: <FilesShot />, badge: <Finder id="b7" /> },
];

const TopBar = () => (
  <MenuBar>
    <MenuGroup>
      <AppleMark />
      <MenuItem $width={132.5} $bold>Python</MenuItem>
      <MenuItem $width={84}>File</MenuItem>
      <MenuItem $width={88}>Edit</MenuItem>
      <MenuItem $width={137}>Window</MenuItem>
      <MenuItem $width={60}>Help</MenuItem>
    </MenuGroup>
    <MenuGroup>
      <StatusIcon $gap={37} width="51" height="24" viewBox="0 0 51 24">
        <rect x="1" y="1" width="44" height="22" rx="6.5" fill="none" stroke="#fff" strokeOpacity=".5" strokeWidth="2" />
        <path d="M48 8 Q51 9.500 51 12 Q51 14.500 48 16Z" fill="#fff" opacity=".55" />
        <rect x="4" y="4" width="14" height="16" rx="3.5" fill="#f1ebfb" />
      </StatusIcon>
      <StatusIcon $gap={37} width="33" height="24" viewBox="0 0 33 24">
        <path d="M2 8.500 Q16.500 -4 31 8.500" fill="none" stroke="#f1ebfb" strokeWidth="4" />
        <path d="M7.500 14 Q16.500 6.500 25.500 14" fill="none" stroke="#f1ebfb" strokeWidth="3.8" />
        <path d="M16.500 23.500 L11.500 18 Q16.500 14.500 21.500 18Z" fill="#f1ebfb" />
      </StatusIcon>
      <StatusIcon $gap={37} width="27" height="26" viewBox="0 0 27 26">
        <circle cx="11" cy="11" r="9.3" fill="none" stroke="#f1ebfb" strokeWidth="2.6" />
        <path d="M17.800 17.800 L24.500 24.500" stroke="#f1ebfb" strokeWidth="3" strokeLinecap="round" />
      </StatusIcon>
      <StatusIcon $gap={34} width="29" height="26" viewBox="0 0 29 26">
        <rect x="1.2" y="1.2" width="26.6" height="10" rx="5" fill="none" stroke="#f1ebfb" strokeWidth="2.4" />
        <circle cx="7" cy="6.2" r="3.2" fill="#f1ebfb" />
        <rect x="0" y="14.5" width="29" height="11.5" rx="5.75" fill="#f1ebfb" />
        <circle cx="22.5" cy="20.2" r="3.7" fill="#2d0b98" />
      </StatusIcon>
      <StatusIcon $gap={31} width="28" height="28" viewBox="0 0 28 28">
        <defs>
          <radialGradient id="siriCore">
            <stop offset="0" stopColor="#fff" />
            <stop offset=".35" stopColor="#bfe4f5" stopOpacity=".85" />
            <stop offset="1" stopColor="#3b6fd0" stopOpacity="0" />
          </radialGradient>
          <linearGradient id="siriRim" x1="0" y1="0" x2="1" y2="1">
            <stop offset="0" stopColor="#b0467e" />
            <stop offset=".4" stopColor="#2f7d7c" />
            <stop offset="1" stopColor="#4a4fd4" />
          </linearGradient>
        </defs>
        <circle cx="14" cy="14" r="14" fill="url(#siriRim)" />
        <path d="M2 8 Q12 8 15 15 Q10 21 3 18Z" fill="#d2456d" opacity=".8" />
        <path d="M14 14 L20 22 Q24 20 25 14Z" fill="#e9f4ff" opacity=".6" />
        <circle cx="15" cy="14.5" r="8" fill="url(#siriCore)" />
      </StatusIcon>
      <MenuItem $width={156}>Thu 15 Sep</MenuItem>
      <MenuItem $width={118}>10:00 PM</MenuItem>
    </MenuGroup>
  </MenuBar>
);

const DesktopFiles = () => (
  <>
    <DesktopItem $x={2447} $y={81}>
      <svg width="118" height="90" viewBox="0 0 118 90">
        <path d="M0 8 Q0 0 8 0 H32 Q38 0 42 4 L46 8 Q49 10 53 10 H110 Q117 10 117 18 V90 H0Z" fill="#52a6dc" />
        <path d="M0 17 H117 V90 H0Z" fill="#3f8fc8" />
      </svg>
    </DesktopItem>
    <DesktopItem $x={2708} $y={70}>
      <svg width="84" height="60" viewBox="0 0 84 60">
        <rect width="84" height="60" rx="3" fill="#e6e6e6" />
        <path d="M5 4 H13 V9 Q13 12 9 13 Q5 12 5 9Z" fill="#fff" stroke="#3f7f4d" />
        <path d="M9 6 L11 9 L8 11Z" fill="#3468b8" />
        <path d="M19 5.500 H78 M34 9.500 H78 M10 15.500 H74 M19 18.500 H64" stroke="#6f6f6f" strokeWidth="1.5" strokeDasharray="6 1" />
        <path d="M24 21.500 H58 M30 23.500 H54 M4 26 H20 M4 29 H78" stroke="#9a9a9a" strokeWidth="1" />
      </svg>
    </DesktopItem>
    <FileLabel $right={2819} $top={432}>.py</FileLabel>
    <DesktopItem $x={2780} $y={605}>
      <svg width="26" height="34" viewBox="0 0 26 34">
        <path d="M0 0 H22 Q26 2 26 6 V28 Q26 32 22 34 H0Z" fill="#dcdce0" />
        <rect width="23" height="29" y="2.5" fill="#4a8fd0" />
      </svg>
    </DesktopItem>
    <FileLabel $right={2836} $top={656}>ty-</FileLabel>
    <FileLabel $right={2864} $top={688}>.ipynb</FileLabel>
    <DesktopItem $x={2770} $y={763}>
      <svg width="39" height="77" viewBox="0 0 39 77">
        <rect x="-40" y="2" width="77" height="73" fill="#251047" stroke="#dcdcdc" strokeWidth="5" />
      </svg>
    </DesktopItem>
    <FileLabel $right={2818} $top={880}>ot</FileLabel>
    <FileLabel $right={2861} $top={912}>9 PM</FileLabel>
    {[987, 1211, 1435].map((y) => (
      <DesktopItem key={y} $x={2690} $y={y}>
        <svg width="119" height="89" viewBox="0 0 119 89">
          <path d="M0 0 H110 Q119 2 119 10 V80 Q119 87 110 89 H0Z" fill="#3f8cc4" />
          <path d="M0 7 H110 Q118 8 118 16 V78 Q118 84 110 85 H0Z" fill="#5fabd8" />
        </svg>
      </DesktopItem>
    ))}
    <FileLabel $right={2809} $top={1551}>resources</FileLabel>
  </>
);

const MainWindow = () => (
  <WindowFrame $x={401} $y={100} $w={2399} $h={1456} $tint="#80170e">
    <TitleBar>
      <Lights $left={15}>
        <Light $color="#4c4953" />
        <Light $color="#4c4953" />
        <Light $color="#4c4953" />
      </Lights>
      Student management system
    </TitleBar>
    <HeaderRow>
      <Banner $light="#fff" $dark="#8e8c8b" $size={8} $w={260} $h={48} $font={24.3} $drop={3} $left={0} $mt={10}>
        Thu Sep 15 21:59:24 2022
      </Banner>
      <Banner $light="#fff" $dark="#8e8c8b" $size={10} $w={860} $h={100} $font={60} $drop={8} $left={446} $mt={0}>
        Student Management System
      </Banner>
      <DatabaseButton>
        <DatabaseFace>To Database</DatabaseFace>
      </DatabaseButton>
    </HeaderRow>
    <Panels>
      <Ridge {...navy} outer={4} inner={6} width={1000} height={1100} fill="#18176a">
        <SelectHeading>SELECT OPTION</SelectHeading>
        <OptionList>
          {options.map((o) => (
            <TkButton key={o} $w={400} $h={66} $edge="10px" $line="#6c6c6c">
              <OptionFace>{o}</OptionFace>
            </TkButton>
          ))}
        </OptionList>
      </Ridge>
      <Ridge light="#ffffff" dark="#8d8f8c" outer={4} inner={6} width={1200} height={1100} fill="#fff">
        <TableArea>
          <Table>
            <TableHead>
              {columns.map((c) => (
                <HeadCell key={c.name} $w={c.width}>{c.name}</HeadCell>
              ))}
            </TableHead>
          </Table>
          <VerticalTrack />
        </TableArea>
        <HorizontalTrack>
          <Thumb />
        </HorizontalTrack>
      </Ridge>
    </Panels>
  </WindowFrame>
);

const EntryWindow = () => (
  <WindowFrame $x={900} $y={500} $w={940} $h={1056} $tint="#ece9e8" $active>
    <TitleBar $active>
      <Lights $left={16}>
        <Light $color="#ed6a5e" />
        <Light $color="#f5bf4f" />
        <Light $color="#5b595f" />
      </Lights>
      Student management system
    </TitleBar>
    <Form>
      {fields.map((f) => (
        <FieldRow key={f}>
          <Ridge {...navy} outer={2} inner={4} width={208} height={50} fill="#18176a">
            <FieldLabel>{f}</FieldLabel>
          </Ridge>
          <EntryBox>
            <Ridge light="#8f8f8f" dark="#575757" outer={2} inner={4} width={336} height={50} fill="#1e1e1e" />
          </EntryBox>
        </FieldRow>
      ))}
      <SubmitRow>
        <TkButton $w={392} $h={58} $edge="6px" $line="#a9a9a9">
          <SubmitFace>Submit</SubmitFace>
        </TkButton>
      </SubmitRow>
    </Form>
  </WindowFrame>
);

const Dock = () => (
  <DockBar>
    {leftApps.map((a, i) => (
      <DockSlot key={i}>
        {a.node}
        {a.running && <RunDot />}
        {a.badge && <NotificationBadge>{a.badge}</NotificationBadge>}
      </DockSlot>
    ))}
    <DockRule $w={35} />
    {rightApps.map((node, i) => (
      <DockSlot key={i}>
        {node}
        <RunDot $bright={i > 1} />
      </DockSlot>
    ))}
    <DockRule $w={34} />
    {minimised.map((m, i) => (
      <ThumbSlot key={i}>
        <MiniWindow $h={m.h} $bg={m.bg}>{m.shot}</MiniWindow>
        <ThumbBadge>{m.badge}</ThumbBadge>
      </ThumbSlot>
    ))}
    <DockSlot>
      <Trash />
    </DockSlot>
  </DockBar>
);

export default function App() {
  return (
    <>
      <Global />
      <Desktop>
        <Wallpaper />
        <TopBar />
        <DesktopFiles />
        <MainWindow />
        <EntryWindow />
        <Dock />
      </Desktop>
    </>
  );
}
